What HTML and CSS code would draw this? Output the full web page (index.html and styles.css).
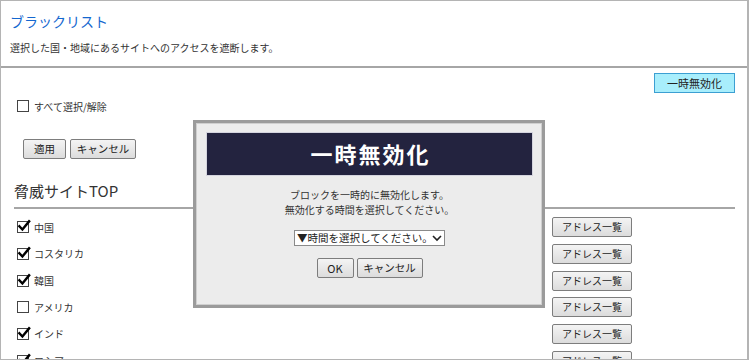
FILE: index.html
```html
<!DOCTYPE html>
<html lang="ja">
<head>
  <meta charset="UTF-8">
  <meta name="viewport" content="width=device-width, initial-scale=1.0">
  <title>ブラックリスト</title>
  <link rel="stylesheet" href="styles.css">
</head>
<body>
  <div class="frame">
    <div class="page-head">
      <h1 class="title">ブラックリスト</h1>
      <p class="lead">選択した国・地域にあるサイトへのアクセスを遮断します。</p>
    </div>

    <div class="toolbar">
      <button class="btn btn-pause">一時無効化</button>
    </div>

    <label class="check-all"><span class="box"></span>すべて選択/解除</label>

    <div class="actions">
      <button class="btn btn-apply">適用</button>
      <button class="btn btn-cancel">キャンセル</button>
    </div>

    <h2 class="section-title">脅威サイトTOP</h2>

    <ul class="site-list">
      <li class="site-row">
        <label class="site-check"><span class="box checked"><svg viewBox="0 0 12 12"><path d="M2.2 5.8 L5 8.8 L11.2 1.2"/></svg></span>中国</label>
        <button class="btn btn-list">アドレス一覧</button>
      </li>
      <li class="site-row">
        <label class="site-check"><span class="box checked"><svg viewBox="0 0 12 12"><path d="M2.2 5.8 L5 8.8 L11.2 1.2"/></svg></span>コスタリカ</label>
        <button class="btn btn-list">アドレス一覧</button>
      </li>
      <li class="site-row">
        <label class="site-check"><span class="box checked"><svg viewBox="0 0 12 12"><path d="M2.2 5.8 L5 8.8 L11.2 1.2"/></svg></span>韓国</label>
        <button class="btn btn-list">アドレス一覧</button>
      </li>
      <li class="site-row">
        <label class="site-check"><span class="box"></span>アメリカ</label>
        <button class="btn btn-list">アドレス一覧</button>
      </li>
      <li class="site-row">
        <label class="site-check"><span class="box checked"><svg viewBox="0 0 12 12"><path d="M2.2 5.8 L5 8.8 L11.2 1.2"/></svg></span>インド</label>
        <button class="btn btn-list">アドレス一覧</button>
      </li>
      <li class="site-row">
        <label class="site-check"><span class="box checked"><svg viewBox="0 0 12 12"><path d="M2.2 5.8 L5 8.8 L11.2 1.2"/></svg></span>ロシア</label>
        <button class="btn btn-list">アドレス一覧</button>
      </li>
    </ul>

    <!-- 一時無効化ダイアログ -->
    <div class="modal">
      <div class="modal-head">一時無効化</div>
      <p class="modal-text">ブロックを一時的に無効化します。<br>無効化する時間を選択してください。</p>
      <div class="select-wrap">
        <select class="time-select">
          <option>▼時間を選択してください。</option>
        </select>
        <svg class="chevron" viewBox="0 0 10 7"><path d="M1 1 L5 5 L9 1"/></svg>
      </div>
      <div class="modal-buttons">
        <button class="btn btn-ok">OK</button>
        <button class="btn btn-cancel">キャンセル</button>
      </div>
    </div>
  </div>
</body>
</html>
```

FILE: styles.css
```css
body {
  margin: 0;
  background: #fff;
  color: #333;
  font-family: "Noto Sans CJK JP", "Noto Sans", sans-serif;
}

.frame {
  position: relative;
  width: 749px;
  height: 360px;
  box-sizing: border-box;
  border: 1px solid #b4b4b4;
  border-right-width: 2px;
  overflow: hidden;
}

.page-head {
  padding: 9px 9px 10px;
  border-bottom: 2px solid #a6a6a6;
}

.title {
  margin: 0;
  font-size: 14px;
  line-height: 22px;
  font-weight: normal;
  color: #1467cf;
}

.lead {
  margin: 8px 0 0;
  font-size: 10px;
  line-height: 16px;
  color: #333;
}

/* ボタン共通 */
.btn {
  height: 20px;
  padding: 0;
  box-sizing: border-box;
  border: 1px solid #7d7d7d;
  border-radius: 2px;
  background: linear-gradient(#f4f4f4, #dcdcdc);
  color: #222;
  font-family: inherit;
  font-size: 10.5px;
  line-height: 18px;
  text-align: center;
  cursor: pointer;
}

.toolbar {
  display: flex;
  justify-content: flex-end;
  padding: 5px 12px 0;
}

.btn-pause {
  width: 81px;
  font-size: 11px;
  background: #a8eefc;
  border-color: #3c9fd2;
  border-radius: 0;
}

.check-all {
  display: flex;
  align-items: center;
  height: 14px;
  margin: 6px 0 0 16px;
  font-size: 10px;
}

.box {
  position: relative;
  width: 12px;
  height: 12px;
  box-sizing: border-box;
  border: 1px solid #444;
  background: #fff;
  margin-right: 5px;
  flex: none;
}

.box svg {
  position: absolute;
  left: -1px;
  top: -2px;
  width: 13px;
  height: 13px;
  overflow: visible;
}

.box svg path {
  fill: none;
  stroke: #000;
  stroke-width: 2.2;
  stroke-linecap: square;
}

.actions {
  display: flex;
  gap: 4px;
  margin: 26px 0 0 22px;
}

.btn-apply {
  width: 43px;
}

.btn-cancel {
  width: 66px;
}

.section-title {
  margin: 22px 12px 0 13px;
  padding-bottom: 6px;
  border-bottom: 2px solid #a6a6a6;
  font-size: 15px;
  line-height: 20px;
  font-weight: normal;
  color: #333;
}

.site-list {
  list-style: none;
  margin: 5px 0 0 16px;
  padding: 0;
}

.site-row {
  display: grid;
  grid-template-columns: 535px auto;
  align-items: center;
  height: 26.65px;
}

.site-check {
  display: flex;
  align-items: center;
  font-size: 10px;
}

.btn-list {
  width: 80px;
  font-size: 10px;
}

/* ダイアログ */
.modal {
  position: absolute;
  left: 192px;
  top: 119px;
  width: 352px;
  height: 188px;
  box-sizing: border-box;
  padding: 9px 9px 0 10px;
  border: 3px solid #9b9b9b;
  box-shadow: inset 0 0 0 1px #cfcfcf;
  background: #ececec;
  text-align: center;
}

.modal-head {
  height: 44px;
  box-sizing: border-box;
  border: 1px solid #d4d4de;
  background: #23233f;
  color: #fff;
  font-size: 22px;
  font-weight: bold;
  line-height: 41px;
  letter-spacing: 2px;
  text-indent: 2px;
}

.modal-text {
  margin: 10.5px 0 0;
  font-size: 10px;
  line-height: 15px;
  color: #333;
}

.select-wrap {
  position: relative;
  width: 151px;
  height: 16px;
  margin: 13.5px auto 0;
}

.time-select {
  display: block;
  appearance: none;
  width: 100%;
  height: 16px;
  box-sizing: border-box;
  margin: 0;
  padding: 0 14px 0 2px;
  border: 1px solid #8a8a8a;
  border-radius: 0;
  background: #fff;
  color: #222;
  font-family: inherit;
  font-size: 10.5px;
  line-height: 14px;
}

.chevron {
  position: absolute;
  right: 3px;
  top: 4.5px;
  width: 10px;
  height: 7px;
  pointer-events: none;
}

.chevron path {
  fill: none;
  stroke: #222;
  stroke-width: 1.6;
}

.modal-buttons {
  display: flex;
  justify-content: center;
  gap: 3px;
  margin-top: 12px;
}

.btn-ok {
  width: 37px;
  font-size: 11px;
}
```
